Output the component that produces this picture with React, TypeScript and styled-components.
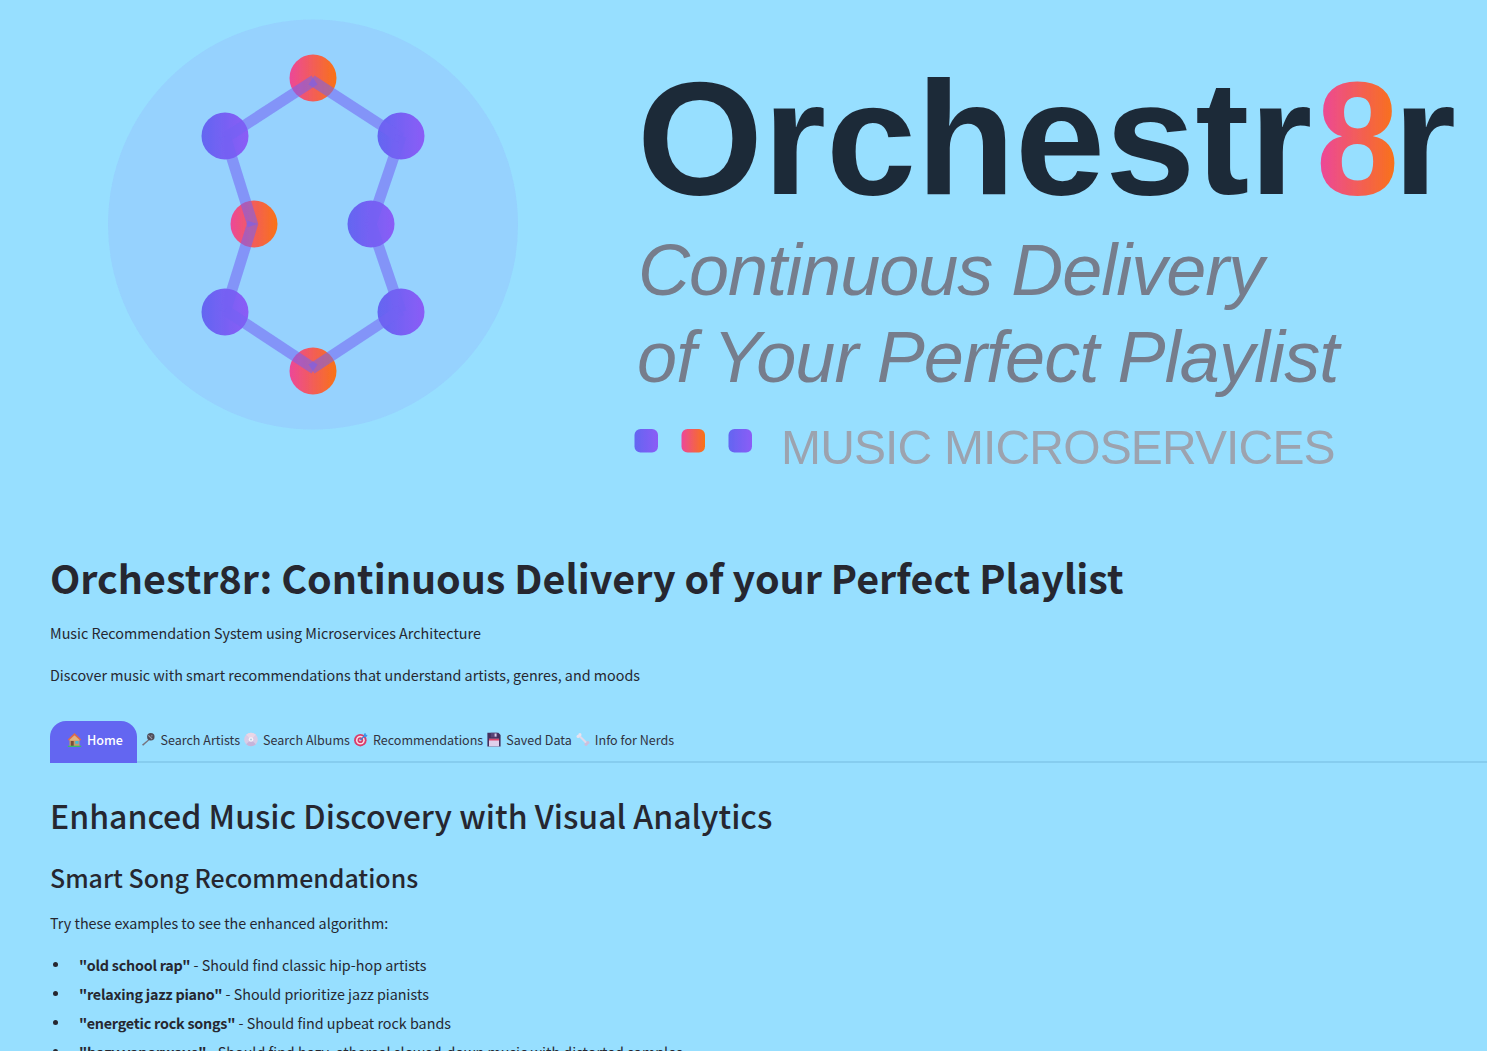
import React from "react";
import styled, { createGlobalStyle } from "styled-components";

const Global = createGlobalStyle`
  html, body { margin: 0; padding: 0; height: 1051px; overflow: hidden; background: #97dfff; }
  body { font-family: "Noto Sans CJK SC", "Source Sans Pro", "Noto Sans", sans-serif; color: #262730; }
  * { box-sizing: border-box; }
`;

const Page = styled.main`
  display: flex;
  flex-direction: column;
`;
const LogoBox = styled.div`
  height: 546px;
`;
const LogoSvg = styled.svg`
  display: block;
`;
const Content = styled.section`
  padding: 0 50px;
  display: flex;
  flex-direction: column;
`;
const Title = styled.h1`
  margin: 0 0 12px;
  font-size: 39.45px;
  line-height: 62px;
  font-weight: 700;
`;
const Para = styled.p`
  margin: 0 0 16px;
  font-size: 14.33px;
  line-height: 26px;
`;
const TabRow = styled.nav`
  display: flex;
  gap: 4px;
  margin: 17px -50px 0 0;
  padding: 0;
  height: 42px;
  border-bottom: 2px solid #86cdef;
  align-items: stretch;
`;
const Tab = styled.div<{ $active?: boolean }>`
  display: flex;
  align-items: center;
  gap: 5px;
  height: 42px;
  font-size: 12.55px;
  padding: ${(p) => (p.$active ? "0 14.5px 6px 17px" : "0 0 6px")};
  border-radius: ${(p) => (p.$active ? "16px 16px 0 0" : "0")};
  background: ${(p) => (p.$active ? "#6366f1" : "transparent")};
  color: ${(p) => (p.$active ? "#ffffff" : "#31333f")};
  font-weight: ${(p) => (p.$active ? 500 : 400)};
`;
const H2 = styled.h2`
  margin: 29px 0 0;
  font-size: 32px;
  line-height: 46px;
  font-weight: 500;
`;
const H3 = styled.h3`
  margin: 17px 0 0;
  font-size: 24.9px;
  line-height: 44px;
  font-weight: 500;
`;
const List = styled.ul`
  margin: 0;
  padding: 0 0 0 3px;
  list-style: none;
  font-size: 14.33px;
  line-height: 25px;
`;
const Item = styled.li`
  display: flex;
  align-items: center;
  gap: 21px;
  margin-bottom: 4px;
`;
const Bullet = styled.span`
  flex: none;
  width: 5px;
  height: 5px;
  border-radius: 50%;
  background: #262730;
`;
const ItemText = styled.span`
  white-space: pre-wrap;
`;
const Strong = styled.strong`
  letter-spacing: -0.22px;
`;
const Intro = styled(Para)`
  margin-top: 11px;
`;

const Icon = styled.svg`
  display: block;
  flex: none;
`;

const House = () => (
  <Icon width="15" height="15" viewBox="0 0 15 15">
    <path d="M2.500 6.500h10v7.500h-10z" fill="#c79a6e" />
    <path d="M7.500 3 12.500 7v1.500h-10V7z" fill="#e3b27f" />
    <path d="M.8 7.600 7.500 1 14.200 7.600l-1.100 1L7.500 3.200 1.900 8.600z" fill="#df6a4a" />
    <rect x="3.800" y="9" width="2.900" height="5" fill="#7d4b36" />
    <rect x="8.300" y="9" width="3.200" height="2.800" fill="#46bcd6" />
    <rect x=".8" y="13.700" width="13.400" height="1.200" fill="#38c25d" />
  </Icon>
);
const Mic = () => (
  <Icon width="14" height="15" viewBox="0 0 15 15">
    <path d="M9 6.500 1 13l1.300 1.300L9.700 7.400z" fill="#77747f" />
    <circle cx="10.500" cy="4.600" r="4" fill="#4e4c58" />
    <path d="M7.900 3 12 7.200" stroke="#a3a1ad" strokeWidth="1.100" />
    <circle cx="11.500" cy="3.500" r="1" fill="#7a7884" />
  </Icon>
);
const Disc = () => (
  <Icon width="14" height="15" viewBox="0 0 15 15">
    <circle cx="7.500" cy="7.500" r="7.300" fill="#d9cce6" />
    <path d="M2.300 2.400 7.500 7.500 12.700 2.400A7.300 7.300 0 0 0 2.300 2.400z" fill="#ead6e6" />
    <path d="M2.300 12.600 7.500 7.500 12.700 12.600A7.300 7.300 0 0 1 2.300 12.600z" fill="#c6b4da" />
    <circle cx="7.500" cy="7.500" r="2.500" fill="#f7f3fa" />
    <circle cx="7.500" cy="7.500" r="1.100" fill="#b9cbe2" />
  </Icon>
);
const Target = () => (
  <Icon width="14" height="15" viewBox="0 0 15 15">
    <circle cx="6.800" cy="8.200" r="6.700" fill="#d93c6b" />
    <circle cx="6.800" cy="8.200" r="4.700" fill="#f7dde6" />
    <circle cx="6.800" cy="8.200" r="3" fill="#d93c6b" />
    <circle cx="6.800" cy="8.200" r="1.200" fill="#f7dde6" />
    <path d="M6.800 8.200 12 3" stroke="#2f80d8" strokeWidth="1.300" />
    <path d="M10.600 1.400 12.400 .5l.3 1.800 1.800.3-1 1.900-2.600.5z" fill="#3d95e8" />
  </Icon>
);
const Floppy = () => (
  <Icon width="14" height="15" viewBox="0 0 14 15">
    <path d="M.4 .8h11l2.200 2.200v11.400H.4z" fill="#44305e" />
    <rect x="3.800" y=".8" width="6.400" height="4.600" fill="#5a4578" />
    <rect x="7.600" y="1.500" width="1.900" height="3.100" fill="#d8cce6" />
    <rect x="2" y="6.800" width="10" height="7.600" fill="#dfd0ec" />
    <rect x="2" y="6.800" width="10" height="1.700" fill="#e0456c" />
  </Icon>
);
const Bone = () => (
  <Icon width="14" height="15" viewBox="0 0 15 15">
    <path d="M3.200 3.200 11.800 11.800" stroke="#e2d9ea" strokeWidth="2.200" />
    <circle cx="2.300" cy="4.200" r="1.700" fill="#e9e2ef" />
    <circle cx="4.200" cy="2.300" r="1.700" fill="#e9e2ef" />
    <circle cx="10.800" cy="12.700" r="1.700" fill="#cdbfdc" />
    <circle cx="12.700" cy="10.800" r="1.700" fill="#cdbfdc" />
  </Icon>
);

const segs: [number, number, number, number][] = [
  [314.500, 80, 225, 138],
  [311.500, 80, 401, 138],
  [225, 136, 253, 225.500],
  [401, 136, 371, 224],
  [253, 222.500, 225, 312],
  [371, 224, 401, 312],
  [225, 310, 314.500, 369],
  [401, 310, 311.500, 369],
];
const nodes: [number, number, string][] = [
  [313, 78, "warm"],
  [225, 136, "cool"],
  [401, 136, "cool"],
  [254, 224, "warm"],
  [371, 224, "cool"],
  [225, 312, "cool"],
  [401, 312, "cool"],
  [313, 371, "warm"],
];

const Logo = () => (
  <LogoSvg width="1487" height="537" viewBox="0 0 1487 537">
    <defs>
      <linearGradient id="warm" x1="0" x2="1" y1="0" y2="0">
        <stop offset="0" stopColor="#ec4899" />
        <stop offset="1" stopColor="#f97316" />
      </linearGradient>
      <linearGradient id="warm8" gradientUnits="userSpaceOnUse" x1="1320" x2="1397" y1="0" y2="0">
        <stop offset="0" stopColor="#ec4899" />
        <stop offset="1" stopColor="#f97316" />
      </linearGradient>
      <linearGradient id="cool" x1="0" x2="1" y1="0" y2="0">
        <stop offset="0" stopColor="#6366f1" />
        <stop offset="1" stopColor="#8b5cf6" />
      </linearGradient>
      <filter id="soft" x="-5%" y="-5%" width="110%" height="110%">
        <feGaussianBlur stdDeviation="0.7" />
      </filter>
    </defs>
    <g filter="url(#soft)">
      <circle cx="313" cy="224.500" r="205" fill="#8b5cf6" fillOpacity="0.1" />
      {nodes.map(([x, y, g]) => (
        <circle key={`${x}-${y}`} cx={x} cy={y} r="23.500" fill={`url(#${g})`} />
      ))}
      {segs.map(([a, b, c, d]) => (
        <line key={`${a}-${b}-${c}-${d}`} x1={a} y1={b} x2={c} y2={d} stroke="#7363f3" strokeOpacity="0.55" strokeWidth="11" />
      ))}
      <text x="637" y="194" fontFamily="Liberation Sans" fontWeight="700" fontSize="162" fill="#1f2937">
        Orchestr
        <tspan x="1316" textLength="83" lengthAdjust="spacingAndGlyphs" fill="url(#warm8)">8</tspan>
        <tspan x="1393">r</tspan>
      </text>
      <text x="638" y="295" fontFamily="Liberation Sans" fontStyle="italic" fontSize="72" letterSpacing="-1" fill="#767d8c">
        Continuous Delivery
      </text>
      <text x="637" y="382" fontFamily="Liberation Sans" fontStyle="italic" fontSize="72" letterSpacing="-0.9" fill="#767d8c">
        of Your Perfect Playlist
      </text>
      <rect x="634.500" y="429" width="23.500" height="23.500" rx="6" fill="url(#cool)" />
      <rect x="681.500" y="429" width="23.500" height="23.500" rx="6" fill="url(#warm)" />
      <rect x="728.500" y="429" width="23.500" height="23.500" rx="6" fill="url(#cool)" />
      <text x="781" y="464" fontFamily="Liberation Sans" fontSize="48" letterSpacing="-0.85" fill="#9ca3af">
        MUSIC MICROSERVICES
      </text>
    </g>
  </LogoSvg>
);

export default function App() {
  return (
    <Page>
      <Global />
      <LogoBox>
        <Logo />
      </LogoBox>
      <Content>
        <Title>Orchestr8r: Continuous Delivery of your Perfect Playlist</Title>
        <Para>Music Recommendation System using Microservices Architecture</Para>
        <Para>Discover music with smart recommendations that understand artists, genres, and moods</Para>
        <TabRow>
          <Tab $active><House />Home</Tab>
          <Tab><Mic />Search Artists</Tab>
          <Tab><Disc />Search Albums</Tab>
          <Tab><Target />Recommendations</Tab>
          <Tab><Floppy />Saved Data</Tab>
          <Tab><Bone />Info for Nerds</Tab>
        </TabRow>
        <H2>Enhanced Music Discovery with Visual Analytics</H2>
        <H3>Smart Song Recommendations</H3>
        <Intro>Try these examples to see the enhanced algorithm:</Intro>
        <List>
          <Item><Bullet /><ItemText><Strong>"old school rap"</Strong> - Should find classic hip-hop artists</ItemText></Item>
          <Item><Bullet /><ItemText><Strong>"relaxing jazz piano"</Strong> - Should prioritize jazz pianists</ItemText></Item>
          <Item><Bullet /><ItemText><Strong>"energetic rock songs"</Strong> - Should find upbeat rock bands</ItemText></Item>
          <Item><Bullet /><ItemText><Strong>"hazy vaporwave"</Strong> - Should find hazy, ethereal slowed-down music with distorted samples</ItemText></Item>
        </List>
      </Content>
    </Page>
  );
}
